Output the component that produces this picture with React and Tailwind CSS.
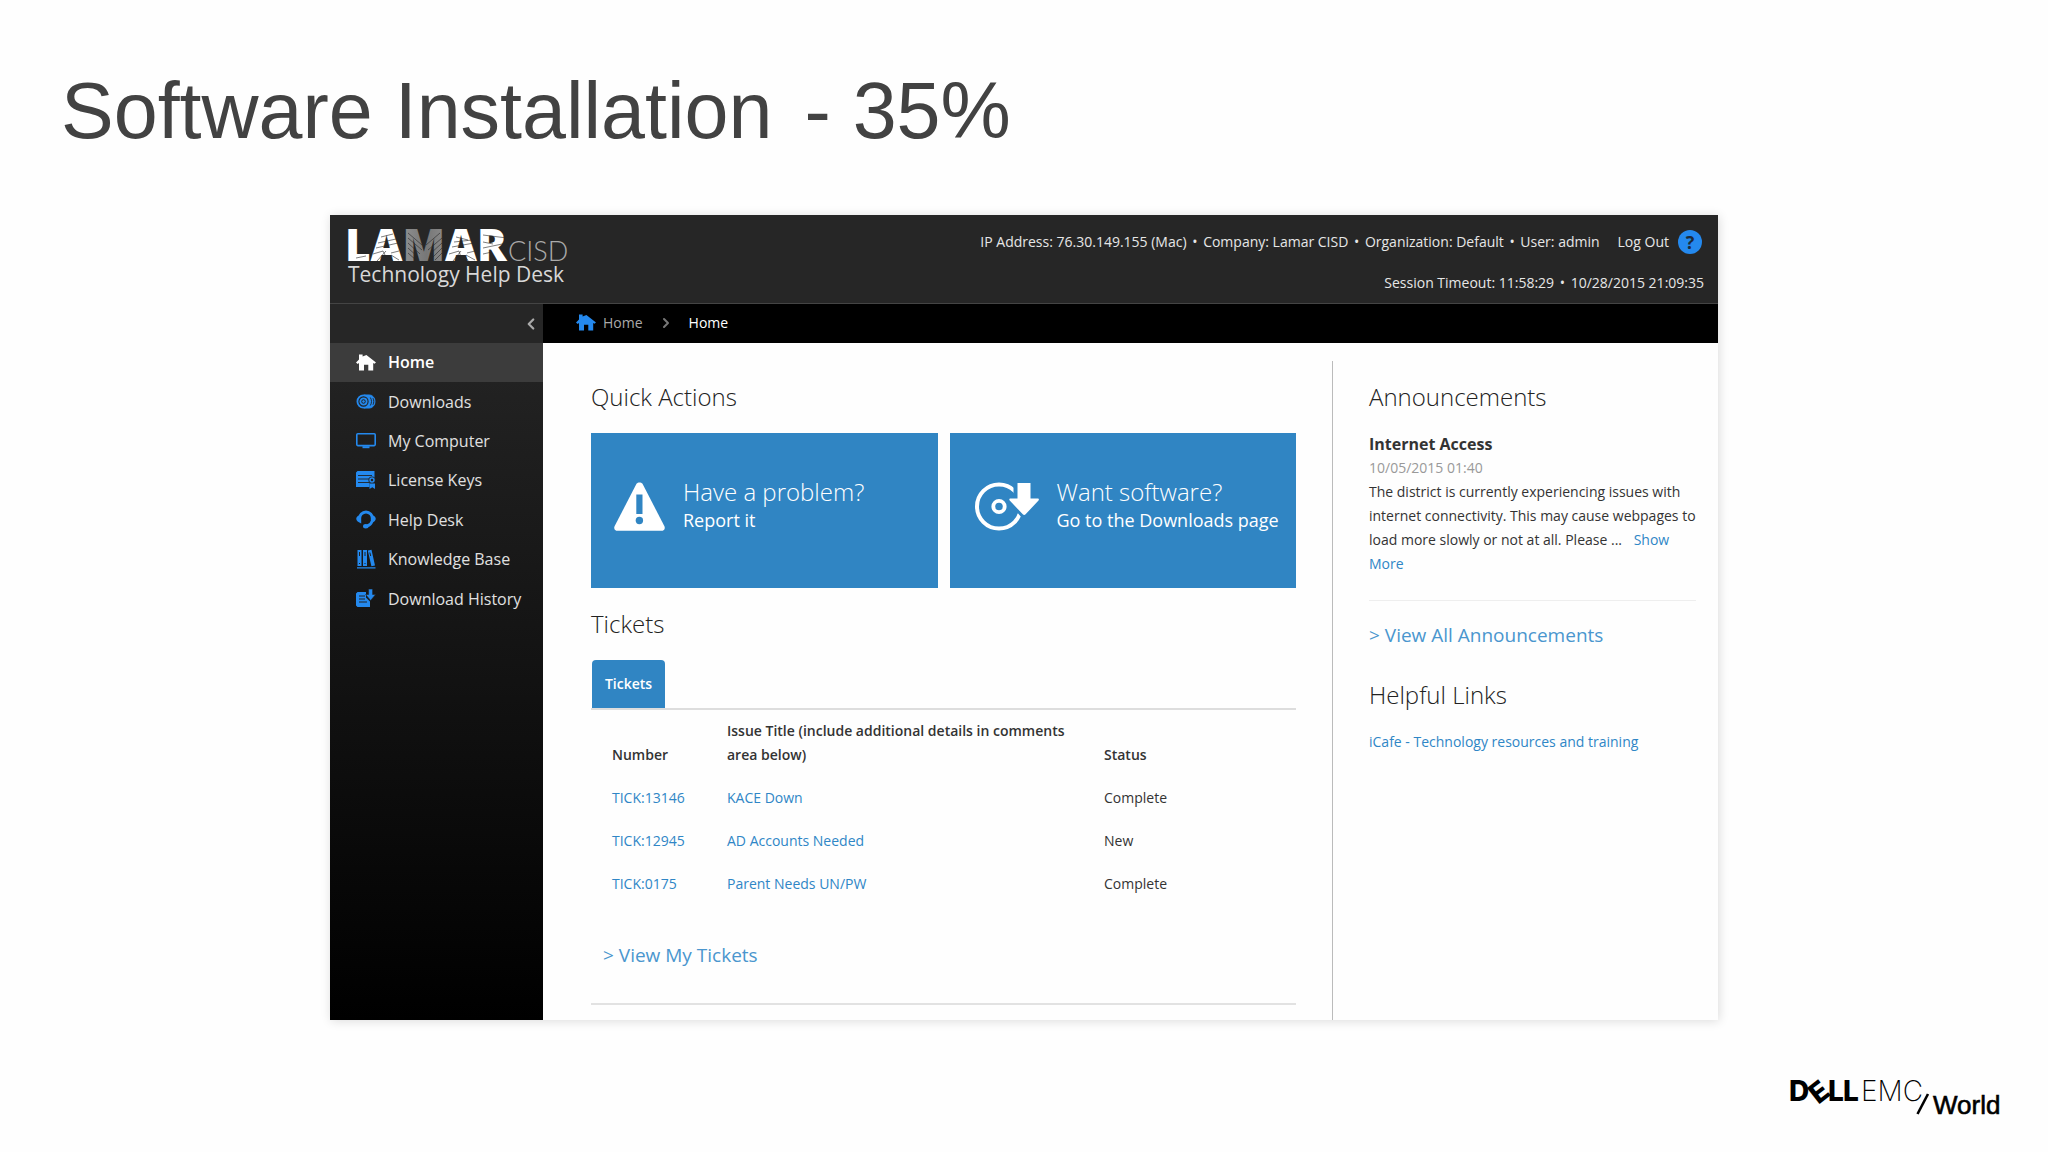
import React, { useState } from 'react';
import { ChevronLeft, ChevronRight } from 'lucide-react';

const HomeIcon = ({ className }) => (
    <svg viewBox="0 0 20 17" width="20" height="17" fill="currentColor" className={className} aria-hidden="true">
        <path d="M3 5.6V.5h3.6v2L10.4 1 20 8.4l-1.6 1.4-1.2-.8v7.500h-4.900v-5.800H8v5.800H3V9l-1.300.9L0 8.400z" />
    </svg>
);

const DiscsIcon = () => (
    <svg viewBox="0 0 20 15" width="20" height="15" fill="none" stroke="currentColor" aria-hidden="true">
        <path d="M8 1h5.500a5.500 6.500 0 0 1 0 13H8z" fill="currentColor" />
        <circle cx="7.500" cy="7.500" r="6" fill="currentColor" strokeWidth="2" />
        <circle cx="7.500" cy="7.500" r="4.600" stroke="#222" strokeWidth="1.100" />
        <circle cx="7.500" cy="7.500" r="1.800" fill="currentColor" stroke="#222" strokeWidth="1" />
        <path d="M14.300 3.500c1.600 2.300 1.600 5.700 0 8M17 4.200c1 2 1 4.600 0 6.600" stroke="#222" strokeWidth=".9" />
    </svg>
);

const MonitorIcon = () => (
    <svg viewBox="0 0 20 16" width="20" height="16" fill="none" stroke="currentColor" aria-hidden="true">
        <rect x=".8" y=".8" width="18.400" height="11.800" rx="1" strokeWidth="1.600" />
        <path d="M6.500 14.200h7" strokeWidth="2" />
    </svg>
);

const LicenseIcon = () => (
    <svg viewBox="0 0 20 18" width="20" height="18" aria-hidden="true">
        <path d="M1.500 0h17v7h-5v9H0V1.500z" fill="currentColor" />
        <path d="M2 4.500h14M2 8h11M2 11.500h11" stroke="#222" strokeWidth=".9" />
        <circle cx="16" cy="9" r="3.600" fill="#222" />
        <circle cx="16" cy="9" r="2" fill="none" stroke="currentColor" strokeWidth="1.500" />
        <path d="M13.500 12.500h5.500V18l-2.700-1.800-2.800 1.800z" fill="currentColor" />
    </svg>
);

const HeadsetIcon = () => (
    <svg viewBox="0 0 20 19" width="20" height="19" fill="none" stroke="currentColor" aria-hidden="true">
        <path d="M3.400 9a6.600 7 0 0 1 13.200 0" strokeWidth="3" />
        <path d="M5.200 5v8.500L2 11.800C-.3 10.200-.3 7.500 2 6zM14.800 5v8.500l3.200-1.700c2.300-1.600 2.300-4.300 0-5.800z" fill="currentColor" stroke="none" />
        <path d="M16 11.500c-.9 2.700-2.600 4-5.200 4.600" strokeWidth="2.600" />
        <ellipse cx="9.800" cy="16.300" rx="2.800" ry="2.200" fill="currentColor" stroke="none" />
    </svg>
);

const BooksIcon = () => (
    <svg viewBox="0 0 20 20" width="20" height="20" aria-hidden="true">
        <path d="M1.500 1h4v16h-4zM7 1h4v16H7zM11.800 1.600l3.700-.9L19 16.600l-3.600.7zM1 18.200h18.500v1.200H1z" fill="currentColor" />
        <path d="M3.500 3v4M9 3v4M13.800 3.500l.9 3.500M3.500 14v1M9 14v1" stroke="#222" strokeWidth="1" />
    </svg>
);

const HistoryIcon = () => (
    <svg viewBox="0 0 20 19" width="20" height="19" aria-hidden="true">
        <path d="M1.500 3H10v5.500l4 4V18H1.500L0 16.500v-12z" fill="currentColor" />
        <path d="M3 7h6M3 10h6M3 13h8" stroke="#222" strokeWidth="1" />
        <path d="M12.600 0h4v5.500h3l-5 6-5-6h3z" fill="currentColor" stroke="#222" strokeWidth=".6" />
    </svg>
);

const WarningIcon = () => (
    <svg viewBox="0 0 51 49" width="51" height="49" aria-hidden="true">
        <path d="M22.500 1.800C24 0 27 0 28.500 1.800L50.300 44c1.300 2.800-.2 4.800-3 4.800H3.700c-2.800 0-4.300-2-3-4.800z" fill="#fff" />
        <path d="M22.300 12.500h6.200V32h-6.200z" fill="#3085c3" />
        <circle cx="25.400" cy="38.500" r="3.700" fill="#3085c3" />
    </svg>
);

const DiscDownloadIcon = () => (
    <svg viewBox="-2 0 66 49" width="66" height="49" aria-hidden="true">
        <circle cx="24" cy="24.500" r="22" fill="none" stroke="#fff" strokeWidth="4" />
        <circle cx="24" cy="24.500" r="5.700" fill="none" stroke="#fff" strokeWidth="3.800" />
        <path d="M38.500 0H60v17h4v7L47 36 34 21v-5h4.500z" fill="#3085c3" />
        <path d="M42.500 1h13v15.500h7.200c1.200 0 1.600 1.200.8 2L50.600 32.300c-.8.9-2 .9-2.800 0L34.700 18.500c-.8-.8-.4-2 .8-2h7z" fill="#fff" />
    </svg>
);

const LamarLogo = () => (
    <svg viewBox="-4 0 234 70" width="234" height="70" className="overflow-visible" role="img" aria-label="Lamar CISD Technology Help Desk">
        <defs>
            <linearGradient id="mFade" x1="0" y1="0" x2="1" y2="0">
                <stop offset="0" stopColor="#ccc" />
                <stop offset=".5" stopColor="#777" />
                <stop offset="1" stopColor="#ccc" />
            </linearGradient>
        </defs>
        <text x="-1" y="42" fontFamily="Open Sans, sans-serif" fontSize="44" fontWeight="800" fill="#fff">
            LA<tspan fill="url(#mFade)">M</tspan>AR
        </text>
        <g stroke="#262626" strokeWidth=".6" fill="none">
            <path d="M10 39l10-2M35 18l12-3M32 24l18-4M30 29l22-5M27 35l10-3 5 10M31 42l9-10M45 34l8-2M45 36l8 5M43 36l4 7M37 36l-1 7" />
            <path d="M62 14l14 12M62 19l14 12M62 24l12 11M62 29l10 9M62 34l8 7M94 14L80 26M96 19L82 31M96 24L84 35M96 29l-9 9M96 34l-7 7" />
            <path d="M110 18l12 3M108 23l18-2M106 28l22-4M103 35l10-3 3 10M107 42l8-10M121 34l8-2M120 36l9 5M118 36l5 7" />
            <path d="M137 16l24 3M137 23l10 2M137 29l24-5M137 35l9-2" />
        </g>
        <text x="162" y="42" fontFamily="Lato, sans-serif" fontSize="27" fontWeight="300" fill="#aaa">CISD</text>
        <text x="2" y="63" fontFamily="Open Sans, sans-serif" fontSize="21" fill="#d8d8d8">Technology Help Desk</text>
    </svg>
);

const DellLogo = () => (
    <svg viewBox="0 1 220 50" width="220" height="50" role="img" aria-label="Dell EMC World">
        <g fontFamily="Inter, sans-serif" fontSize="28" fontWeight="800" fill="#000">
            <text x="4" y="32">D</text>
            <text x="25" y="32" transform="rotate(-38 35 22)">E</text>
            <text x="43" y="32">L</text>
            <text x="58" y="32">L</text>
        </g>
        <text x="76" y="32" fontFamily="Inter, sans-serif" fontSize="28" fontWeight="200" fill="#000">EMC</text>
        <path d="M132.500 45l10.500-20" stroke="#000" strokeWidth="2.600" />
        <text x="148" y="45" fontFamily="Liberation Sans, Arial, sans-serif" fontSize="26" fill="#000" stroke="#000" strokeWidth=".6">World</text>
    </svg>
);

const navItems = [
    { label: 'Home', Icon: HomeIcon },
    { label: 'Downloads', Icon: DiscsIcon },
    { label: 'My Computer', Icon: MonitorIcon },
    { label: 'License Keys', Icon: LicenseIcon },
    { label: 'Help Desk', Icon: HeadsetIcon },
    { label: 'Knowledge Base', Icon: BooksIcon },
    { label: 'Download History', Icon: HistoryIcon },
];

const tickets = [
    { number: 'TICK:13146', title: 'KACE Down', status: 'Complete' },
    { number: 'TICK:12945', title: 'AD Accounts Needed', status: 'New' },
    { number: 'TICK:0175', title: 'Parent Needs UN/PW', status: 'Complete' },
];

const Heading = ({ children, className = '' }) => (
    <h2 className={`text-2xl font-light text-[#222] ${className}`}>{children}</h2>
);

const ActionTile = ({ icon, title, text }) => (
    <a href="#" className="flex h-[155px] flex-1 items-center gap-[18px] bg-[#3085c3] pb-2 pl-[23px] text-white">
        {icon}
        <span className="pb-1.5 whitespace-nowrap">
            <span className="block text-2xl leading-8 font-light">{title}</span>
            <span className="block text-lg leading-6">{text}</span>
        </span>
    </a>
);

// facts on one line, parted by bullets
const FactList = ({ items }) => (
    <span>
        {items.map((item, i) => (
            <React.Fragment key={item}>
                {i > 0 && <span className="mx-0.5"> • </span>}
                {item}
            </React.Fragment>
        ))}
    </span>
);

const Header = () => (
    <header className="flex h-[89px] justify-between border-b border-[#444] bg-[#262626] pr-[14px] pl-3 text-sm leading-6 text-[#e6e6e6]">
        <div className="pt-1"><LamarLogo /></div>
        <div className="flex flex-col items-end gap-[17px] pt-[15px]">
            <div className="flex items-center pr-0.5">
                <FactList items={['IP Address: 76.30.149.155 (Mac)', 'Company: Lamar CISD', 'Organization: Default', 'User: admin']} />
                <a href="#" className="ml-[18px]">Log Out</a>
                <button type="button" aria-label="Help" className="ml-[9px] h-6 w-6 rounded-full bg-[#2489ee] text-lg leading-6 font-bold text-[#1b2a3a]">?</button>
            </div>
            <FactList items={['Session Timeout: 11:58:29', '10/28/2015 21:09:35']} />
        </div>
    </header>
);

const Sidebar = ({ active, onSelect }) => (
    <nav className="w-[213px] shrink-0 bg-linear-to-b/srgb from-[#262626] to-black">
        <div className="flex h-[39px] items-center justify-end bg-[#262626] pr-[3px]">
            <button type="button" aria-label="Collapse menu" className="text-[#aaa]"><ChevronLeft size={18} strokeWidth={3} /></button>
        </div>
        <ul className="grid h-69 grid-rows-7 text-base text-[#e0e0e0]">
            {navItems.map(({ label, Icon }) => (
                <li key={label} className={label === active ? 'bg-[#3c3c3c] font-semibold text-white' : ''}>
                    <a href="#" onClick={() => onSelect(label)} className="flex h-full items-center gap-3 pb-px pl-[26px]">
                        <span className={label === active ? 'text-white' : 'text-[#2489ee]'}><Icon /></span>
                        {label}
                    </a>
                </li>
            ))}
        </ul>
    </nav>
);

const TicketTable = () => (
    <table className="w-full table-fixed text-left text-sm leading-6 text-[#333]">
        <thead>
            <tr className="align-bottom">
                <th className="w-[136px] py-[9px] pl-[21px] font-semibold">Number</th>
                <th className="w-[377px] py-[9px] pr-5 font-semibold">Issue Title (include additional details in comments area below)</th>
                <th className="py-[9px] font-semibold">Status</th>
            </tr>
        </thead>
        <tbody>
            {tickets.map(t => (
                <tr key={t.number} className="h-[43px]">
                    <td className="pl-[21px]"><a href="#" className="text-[#2f86c6]">{t.number}</a></td>
                    <td><a href="#" className="text-[#2f86c6]">{t.title}</a></td>
                    <td>{t.status}</td>
                </tr>
            ))}
        </tbody>
    </table>
);

const Announcements = () => (
    <aside className="mt-[18px] w-[386px] shrink-0 border-l border-[#bbb] pt-5 pr-[22px] pl-9 text-sm leading-6 text-[#333]">
        <Heading>Announcements</Heading>
        <h3 className="mt-[19px] text-base leading-6 font-bold">Internet Access</h3>
        <p className="text-[#999]">10/05/2015 01:40</p>
        <p>
            The district is currently experiencing issues with internet connectivity. This may cause webpages to load more slowly or not at all. Please ... <a href="#" className="ml-2 text-[#2f86c6]">Show More</a>
        </p>
        <a href="#" className="mt-6 block border-t border-[#eee] pt-[22px] text-[19px] leading-6 text-[#4a96ce]">&gt; View All Announcements</a>
        <Heading className="mt-8">Helpful Links</Heading>
        <a href="#" className="mt-[19px] block text-[#2f86c6]">iCafe - Technology resources and training</a>
    </aside>
);

const App = () => {
    const [active, setActive] = useState('Home');

    return (
        <div className="flex min-h-screen flex-col bg-[#fefefe] font-['Open_Sans',sans-serif]">
            <h1 className="flex gap-8 pt-[63px] pl-[61px] font-['Liberation_Sans',Arial,sans-serif] text-[79px] leading-[96px] text-[#424242]">
                <span>Software Installation</span>
                <span>- 35%</span>
            </h1>

            <div className="mx-auto mt-14 w-full max-w-[1388px] bg-[#fefefe] shadow-[1px_1px_10px_rgba(0,0,0,0.14)]">
                <Header />
                <div className="flex">
                    <Sidebar active={active} onSelect={setActive} />
                    <div className="min-w-0 flex-1">
                        <div className="flex h-[39px] items-center bg-black pb-0.5 pl-[33px] text-sm text-[#aaa]">
                            <HomeIcon className="text-[#2489ee]" />
                            <a href="#" className="ml-[7px]">Home</a>
                            <ChevronRight size={16} strokeWidth={3} className="mx-[15px] text-[#777]" />
                            <span className="text-white">Home</span>
                        </div>
                        <div className="flex">
                            <main className="min-w-0 flex-1 pt-[38px] pr-9 pb-[15px] pl-12">
                                <Heading>Quick Actions</Heading>
                                <div className="mt-5 flex gap-3">
                                    <ActionTile icon={<WarningIcon />} title="Have a problem?" text="Report it" />
                                    <ActionTile icon={<DiscDownloadIcon />} title="Want software?" text="Go to the Downloads page" />
                                </div>
                                <Heading className="mt-5">Tickets</Heading>
                                <div className="mt-5 border-b-2 border-[#ddd] pl-px">
                                    <button type="button" className="block h-12 w-[73px] rounded-t-sm bg-[#3085c3] text-sm font-semibold text-white">Tickets</button>
                                </div>
                                <TicketTable />
                                <a href="#" className="mt-[38px] block border-b-2 border-[#e2e2e2] pb-9 pl-3 text-[19px] leading-6 text-[#4a96ce]">&gt; View My Tickets</a>
                            </main>
                            <Announcements />
                        </div>
                    </div>
                </div>
            </div>

            <footer className="mt-[50px] flex justify-end pr-[43px]">
                <DellLogo />
            </footer>
        </div>
    );
};

export default App;
